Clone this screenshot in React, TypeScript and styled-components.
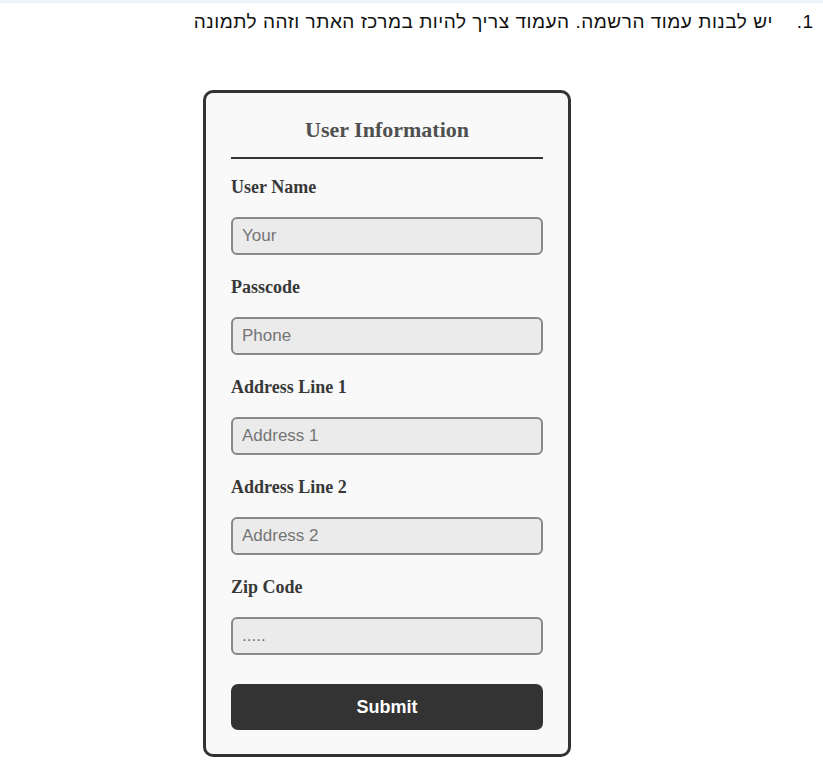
import React from "react";
import styled, { createGlobalStyle } from "styled-components";

const GlobalStyle = createGlobalStyle`
  html, body {
    margin: 0;
    padding: 0;
    background: #ffffff;
  }
  body {
    font-family: "Liberation Sans", Arial, sans-serif;
  }
`;

const TopBar = styled.div`
  height: 3px;
  background: #edf3fc;
`;

const Page = styled.div`
  padding: 0 8px 16px;
`;

const Steps = styled.ol`
  direction: rtl;
  margin: 8px 0 0;
  padding: 0 24px 0 0;
  font-family: "Liberation Sans", Arial, sans-serif;
  font-size: 19px;
  line-height: 22px;
  color: #111;
`;

const Step = styled.li`
  padding-right: 18px;
  letter-spacing: 0.52px;
`;

const Card = styled.form`
  box-sizing: border-box;
  width: 368px;
  margin: 57px 0 0 195px;
  padding: 0 25px 24px;
  background: #f9f9f9;
  border: 3px solid #333;
  border-radius: 10px;
  display: flex;
  flex-direction: column;
`;

const Title = styled.h2`
  margin: 24px 0 0;
  font-family: "Liberation Serif", "Times New Roman", serif;
  font-weight: bold;
  font-size: 22px;
  line-height: 26px;
  color: #505050;
  text-align: center;
`;

const Divider = styled.hr`
  margin: 14px 0 0;
  height: 2px;
  border: 0;
  background: #333;
`;

const Field = styled.div`
  display: flex;
  flex-direction: column;
  margin-top: 17px;
  & + & {
    margin-top: 21px;
  }
`;

const Label = styled.label`
  font-family: "Liberation Serif", "Times New Roman", serif;
  font-weight: bold;
  font-size: 18px;
  line-height: 22px;
  color: #383838;
`;

const Input = styled.input`
  box-sizing: border-box;
  margin-top: 19px;
  height: 38px;
  width: 100%;
  padding: 0 9px;
  border: 2px solid #888;
  border-radius: 6px;
  background: #ebebeb;
  font-family: "Liberation Sans", Arial, sans-serif;
  font-size: 17px;
  color: #333;
  outline: none;
  &::placeholder {
    color: #757575;
  }
`;

const SubmitButton = styled.button`
  margin-top: 29px;
  height: 46px;
  border: 0;
  border-radius: 7px;
  background: #333;
  color: #fff;
  font-family: "Liberation Sans", Arial, sans-serif;
  font-weight: bold;
  font-size: 18px;
  cursor: pointer;
`;

const fields = [
  { label: "User Name", placeholder: "Your" },
  { label: "Passcode", placeholder: "Phone" },
  { label: "Address Line 1", placeholder: "Address 1" },
  { label: "Address Line 2", placeholder: "Address 2" },
  { label: "Zip Code", placeholder: "....." },
];

export default function App() {
  return (
    <>
      <GlobalStyle />
      <TopBar />
      <Page>
        <Steps>
          <Step>יש לבנות עמוד הרשמה. העמוד צריך להיות במרכז האתר וזהה לתמונה</Step>
        </Steps>
        <Card onSubmit={(e) => e.preventDefault()}>
          <Title>User Information</Title>
          <Divider />
          {fields.map((f) => (
            <Field key={f.label}>
              <Label>{f.label}</Label>
              <Input placeholder={f.placeholder} />
            </Field>
          ))}
          <SubmitButton type="submit">Submit</SubmitButton>
        </Card>
      </Page>
    </>
  );
}
